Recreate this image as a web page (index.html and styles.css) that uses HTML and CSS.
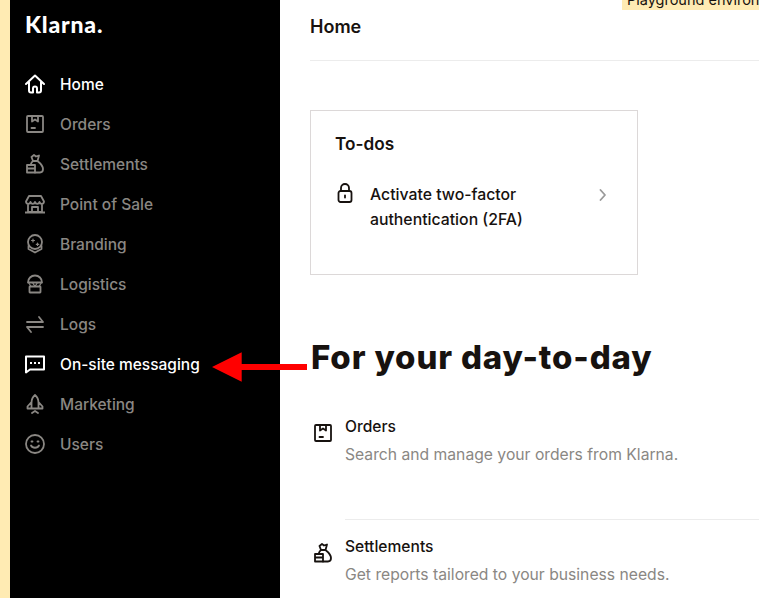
FILE: index.html
```html
<!DOCTYPE html>
<html lang="en">
<head>
  <meta charset="UTF-8" />
  <title>Klarna – Home</title>
  <link rel="stylesheet" href="styles.css">
</head>
<body>
  <div class="strip"></div>

  <aside class="sidebar">
    <div class="logo">Klarna.</div>
    <nav>
      <a class="nav-item active" href="#">
        <svg class="bold" viewBox="0 0 20 20"><path d="M1 10 10 1.500 19 10M4 8v8.500a2 2 0 0 0 2 2h2v-4a2 2 0 0 1 4 0v4h2a2 2 0 0 0 2-2V8"/></svg>
        Home
      </a>
      <a class="nav-item" href="#">
        <svg viewBox="0 0 20 20"><rect x="2" y="2" width="16" height="16" rx="1"/><path d="M7 2v5.500l3-2 3 2V2M6.500 14h3.500"/></svg>
        Orders
      </a>
      <a class="nav-item" href="#">
        <svg viewBox="0 0 20 20"><path d="M8 7 6.500 3 9 1l2 1.500 3-1L12.500 7zM8 7h4.500c2.500 2 5.500 5 5.500 8 0 2.500-1 3.500-3 3.500h-5M8 7C6.500 8 6 9.500 5.500 11"/><path d="M2 11h8v7.500H2zM2 14.500h8"/></svg>
        Settlements
      </a>
      <a class="nav-item" href="#">
        <svg viewBox="0 0 20 20"><path d="M4 2h12l3 5.500c0 3-4 3-4.500.500-.5 2.500-4 2.500-4.500 0-.5 2.500-4 2.500-4.500 0C5 10.500 1 10.500 1 7.500zM3 10.500V18h14v-7.500M0 18.500h20M7 18v-5h6v5"/></svg>
        Point of Sale
      </a>
      <a class="nav-item" href="#">
        <svg viewBox="0 0 20 20"><circle cx="10" cy="8" r="7"/><path class="fine" d="M8 5v3M6.500 6.500h3M12.500 9v2.500M11.300 10.300h2.500"/><path d="M3.500 12v3l6.500 3.500 6.500-3.500v-3"/></svg>
        Branding
      </a>
      <a class="nav-item" href="#">
        <svg viewBox="0 0 20 20"><path d="M3 8.500C3 4.500 6 1.500 10 1.500s7 3 7 7z"/><path class="fine" d="M7.500 8.500l2.500 4 2.500-4M3.500 8.500l2.500 4M16.500 8.500l-2.500 4"/><rect x="4.500" y="12.500" width="11" height="6" rx=".5"/></svg>
        Logistics
      </a>
      <a class="nav-item" href="#">
        <svg viewBox="0 0 20 20"><path d="M2 8h16l-4-5M18 13H2l4 5"/></svg>
        Logs
      </a>
      <a class="nav-item active" href="#">
        <svg class="bold" viewBox="0 0 20 20"><path d="M1 2.500h18v13H5l-4 3z"/><path class="dots" d="M5 9h2M9 9h2M13 9h2"/></svg>
        On-site messaging
      </a>
      <a class="nav-item" href="#">
        <svg viewBox="0 0 20 20"><path d="M10 1c2.500 2 3.500 5 3.500 8v5.500h-7V9c0-3 1-6 3.500-8zM6.500 8 2.500 12.500v2h4M13.500 8l4 4.500v2h-4M7 19l3-2 3 2"/></svg>
        Marketing
      </a>
      <a class="nav-item" href="#">
        <svg viewBox="0 0 20 20"><circle cx="10" cy="10" r="9"/><path d="M6 11.500c1.500 3 6.500 3 8 0M6.500 7.500h1M12.500 7.500h1"/></svg>
        Users
      </a>
    </nav>
  </aside>

  <main class="content">
    <div class="env-badge">Playground environment</div>

    <header class="page-header">
      <h1>Home</h1>
    </header>

    <section class="todo-card">
      <h2>To-dos</h2>
      <div class="todo-row">
        <svg class="lock" viewBox="0 0 16 20"><rect x="1.500" y="8" width="13" height="11" rx="2"/><path d="M4 8V5a4 4 0 0 1 8 0v3"/><path d="M8 12.500v2"/></svg>
        <span class="todo-text">Activate two-factor authentication (2FA)</span>
        <svg class="chevron" viewBox="0 0 8 12"><path d="M1.500 1 6 6l-4.500 5"/></svg>
      </div>
    </section>

    <h2 class="section-title">For your day-to-day</h2>

    <div class="feature">
      <svg viewBox="0 0 20 20"><rect x="2" y="2" width="16" height="16" rx="1"/><path d="M7 2v5.500l3-2 3 2V2M6.500 14h3.500"/></svg>
      <div class="feature-text">
        <h3>Orders</h3>
        <p>Search and manage your orders from Klarna.</p>
      </div>
    </div>

    <div class="feature">
      <svg viewBox="0 0 20 20"><path d="M8 7 6.500 3 9 1l2 1.500 3-1L12.500 7zM8 7h4.500c2.500 2 5.500 5 5.500 8 0 2.500-1 3.500-3 3.500h-5M8 7C6.500 8 6 9.500 5.500 11"/><path d="M2 11h8v7.500H2zM2 14.500h8"/></svg>
      <div class="feature-text">
        <h3>Settlements</h3>
        <p>Get reports tailored to your business needs.</p>
      </div>
    </div>
  </main>

  <svg class="arrow" viewBox="0 0 96 32"><path d="M0 16 30 1v12h66v6H30v12z"/></svg>
</body>
</html>
```

FILE: styles.css
```css
* {
  box-sizing: border-box;
}

html, body {
  margin: 0;
  height: 598px;
  overflow: hidden;
}

body {
  position: relative;
  display: flex;
  font-family: 'Inter', 'Liberation Sans', sans-serif;
  background-color: #fff;
  color: #17120f;
}

svg {
  fill: none;
  stroke: currentColor;
  stroke-width: 1.800;
  stroke-linecap: round;
  stroke-linejoin: round;
}

svg.bold {
  stroke-width: 2;
}

.fine {
  stroke-width: 1.200;
}

.strip {
  flex: 0 0 10px;
  background-color: #ffebb3;
}

.sidebar {
  flex: 0 0 270px;
  background-color: #000;
  padding: 12px 15px 0;
}

.logo {
  color: #fff;
  font-family: 'Lato', sans-serif;
  font-size: 23px;
  font-weight: 900;
  line-height: 24px;
  letter-spacing: 0.800px;
  margin-bottom: 28px;
}

.nav-item {
  display: flex;
  align-items: center;
  gap: 15px;
  height: 40px;
  color: #8a8783;
  font-size: 15.500px;
  font-weight: 500;
  text-decoration: none;
}

.nav-item svg {
  flex: 0 0 20px;
  width: 20px;
  height: 20px;
}

.nav-item.active {
  color: #fff;
}

.dots {
  stroke-width: 2.200;
  stroke-linecap: butt;
}

.content {
  position: relative;
  flex: 1;
  min-width: 0;
  padding-left: 30px;
  overflow: hidden;
}

.env-badge {
  position: absolute;
  top: -8px;
  left: 342px;
  width: 200px;
  height: 18px;
  padding: 0 5px;
  background-color: #ffebb3;
  font-size: 14.500px;
  line-height: 15px;
  white-space: nowrap;
}

.page-header {
  height: 61px;
  border-bottom: 1px solid #ececec;
  padding-top: 14px;
}

h1 {
  margin: 0;
  font-size: 18px;
  font-weight: 600;
  line-height: 26px;
}

.todo-card {
  width: 328px;
  height: 165px;
  margin-top: 49px;
  padding: 20px 24px;
  border: 1px solid #dcd8d8;
}

.todo-card h2 {
  margin: 0 0 25px;
  font-size: 17.200px;
  font-weight: 600;
  line-height: 26px;
}

.todo-row {
  display: flex;
  align-items: flex-start;
  font-size: 15.800px;
  font-weight: 500;
  line-height: 25px;
}

.lock {
  flex: 0 0 16px;
  width: 16px;
  height: 20px;
  margin: 1px 0 0 2px;
}

.todo-text {
  flex: 0 0 190px;
  margin-left: 17px;
}

.chevron {
  width: 8px;
  height: 12px;
  margin: 7px 0 0 39px;
  color: #9a9a9a;
}

.section-title {
  margin: 60px 0 20px 1px;
  font-size: 33px;
  font-weight: 800;
  line-height: 44px;
  letter-spacing: 0.850px;
}

.feature {
  display: flex;
  height: 120px;
}

.feature > svg {
  flex: 0 0 20px;
  width: 20px;
  height: 20px;
  margin: 24px 12px 0 3px;
}

.feature-text {
  flex: 1;
  padding-top: 16px;
}

.feature + .feature .feature-text {
  border-top: 1px solid #ececec;
  padding-top: 15px;
}

h3 {
  margin: 0;
  font-size: 15.600px;
  font-weight: 500;
  line-height: 24px;
}

p {
  margin: 4px 0 0;
  font-size: 15.700px;
  line-height: 24px;
  color: #8a8783;
}

.arrow {
  position: absolute;
  top: 351px;
  left: 212px;
  width: 95px;
  height: 32px;
  fill: #f00;
  stroke: none;
}
```
